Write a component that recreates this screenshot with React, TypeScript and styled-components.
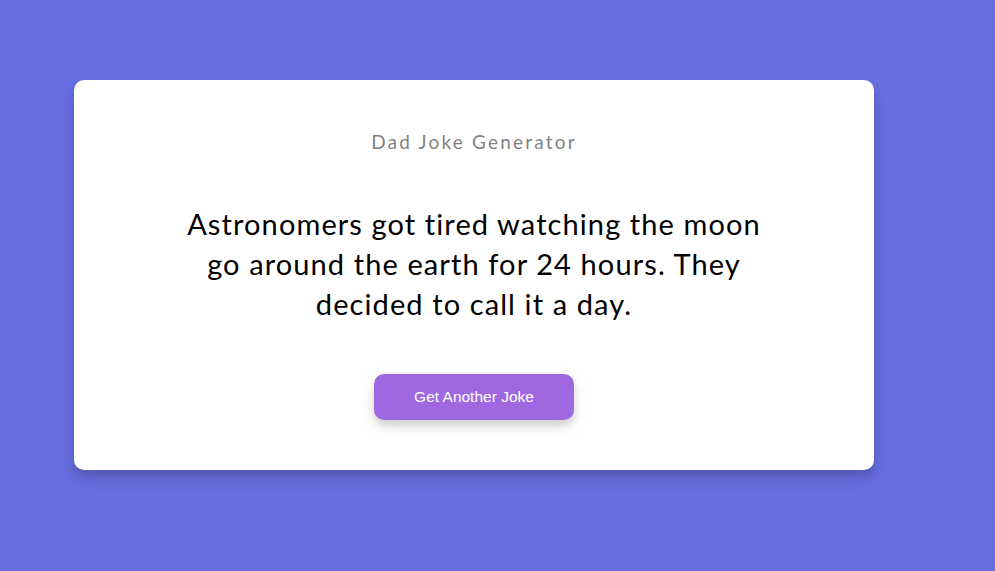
import React from "react";
import styled, { createGlobalStyle } from "styled-components";

const Global = createGlobalStyle`
  * { box-sizing: border-box; }
  html, body { margin: 0; padding: 0; background: #686de0; }
  body { font-family: "Lato", "Noto Sans", sans-serif; }
`;

const Page = styled.div`
  min-height: 100vh;
  padding: 80px 0 0 74px;
  background: #686de0;
`;

const Card = styled.div`
  width: 800px;
  background: #fff;
  border-radius: 10px;
  box-shadow: 0 10px 20px rgba(0, 0, 0, 0.1), 0 6px 6px rgba(0, 0, 0, 0.1);
  padding: 50px 20px;
  text-align: center;
`;

const Title = styled.h3`
  margin: 0;
  font-size: 19px;
  font-weight: 400;
  letter-spacing: 2.2px;
  line-height: 24px;
  color: #000;
  opacity: 0.5;
`;

const Joke = styled.div`
  font-size: 29px;
  letter-spacing: 1.1px;
  line-height: 40px;
  margin: 50px auto;
  max-width: 600px;
  color: #000;
`;

const Button = styled.button`
  background: #9f68e0;
  color: #fff;
  border: 0;
  border-radius: 10px;
  box-shadow: 0 5px 15px rgba(0, 0, 0, 0.1), 0 6px 6px rgba(0, 0, 0, 0.1);
  width: 200px;
  height: 46px;
  padding: 0;
  font-family: "Liberation Sans", Arial, sans-serif;
  font-size: 15.5px;
  cursor: pointer;
`;

export default function App() {
  return (
    <>
      <Global />
      <Page>
        <Card>
          <Title>Dad Joke Generator</Title>
          <Joke>
            Astronomers got tired watching the moon go around the earth for 24
            hours. They decided to call it a day.
          </Joke>
          <Button>Get Another Joke</Button>
        </Card>
      </Page>
    </>
  );
}
